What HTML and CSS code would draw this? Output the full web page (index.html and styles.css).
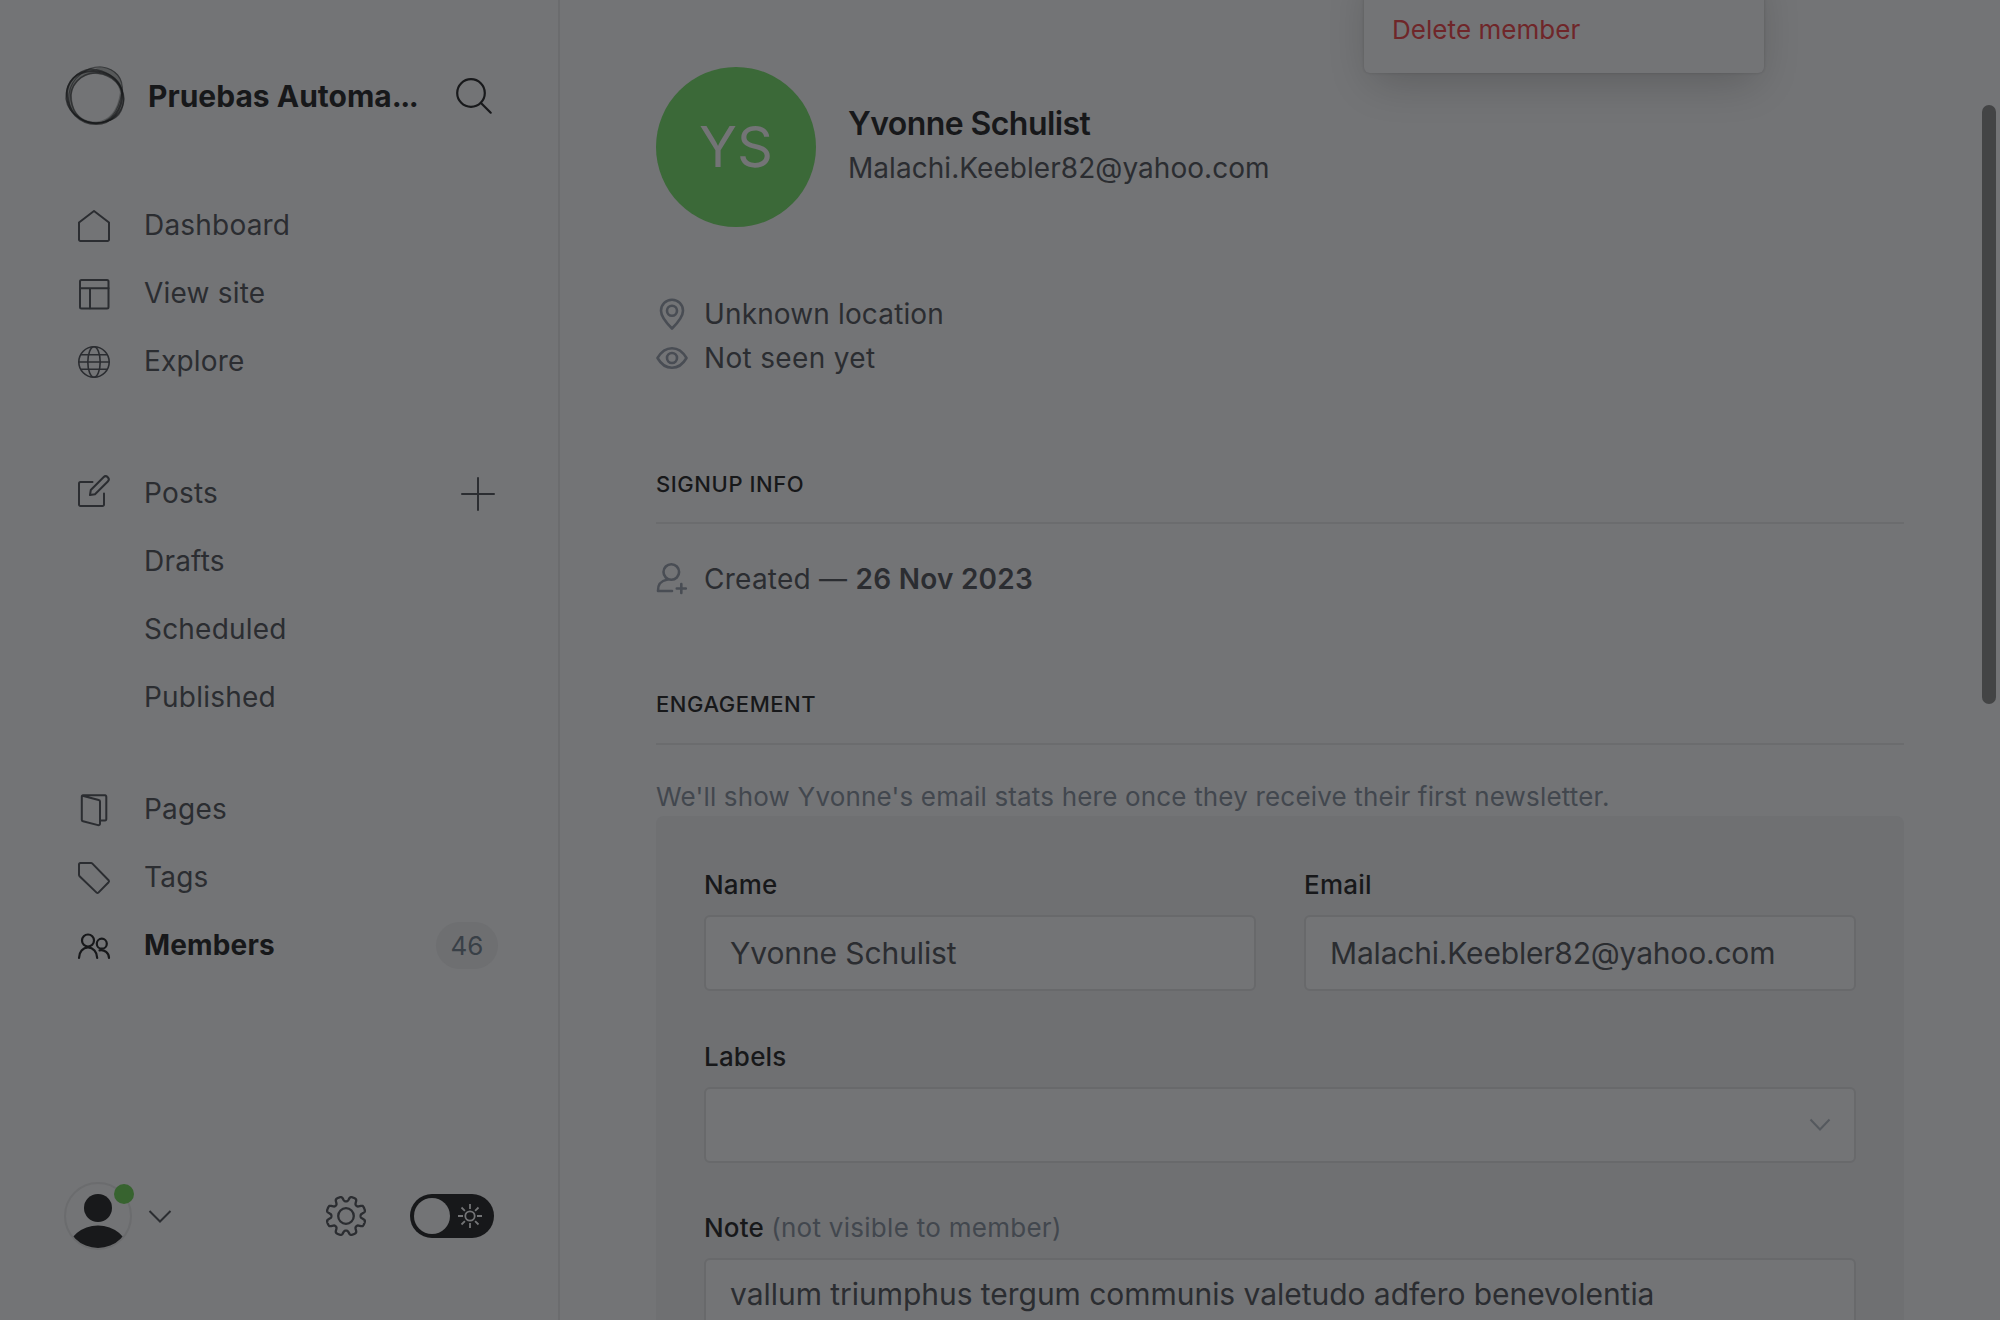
FILE: index.html
```html
<!DOCTYPE html>
<html lang="en">
<head>
<meta charset="utf-8">
<title>Members</title>
<link rel="stylesheet" href="styles.css">
</head>
<body>
<div class="app">
  <aside class="sidebar">
    <header class="site">
      <svg class="site-logo" viewBox="0 0 60 60" fill="none" stroke="#18191b">
        <path fill="#18191b" fill-opacity=".3" fill-rule="evenodd" stroke="none" d="M1 31C1 14 12 3 30 3C38 -2 56 4 57 19C62 36 56 52 44 55C20 64 2 48 1 31ZM7 32C8 46 16 56 32 55.500C46 54 53 42 55 26C52 12 42 8 28 8C14 10 6 20 7 32Z"/>
        <path d="M2 30C1 15 12 5 28 5C44 6 55 14 57 27C58 43 47 58 31 58C14 58 3 45 2 30Z" stroke-width="2" stroke-opacity=".7"/>
        <path d="M1 33C0 18 12 4 26 3C40 4 54 12 57 24C61 40 56 52 42 55C24 62 3 49 1 33Z" stroke-width="1.300" stroke-opacity=".6"/>
        <path d="M6 34C4 20 16 6 32 7C48 9 58 20 59 33C58 46 47 57 32 57C17 58 8 48 6 34Z" stroke-width="1.500" stroke-opacity=".6"/>
        <path d="M4 28C6 12 22 0 37 1C50 3 59 12 57 26C54 44 46 57 30 57C12 56 2 42 4 28Z" stroke-width="1.200" stroke-opacity=".55"/>
      </svg>
      <h1 class="site-title">Pruebas Automa<span class="dots">...</span></h1>
      <svg class="icon-search" viewBox="0 0 36 36" fill="none" stroke="#18191b" stroke-width="2.200" stroke-linecap="round"><circle cx="15" cy="15" r="13.800"/><path d="M25 25l9.700 9.700"/></svg>
    </header>

    <nav class="nav">
      <ul class="group">
        <li><svg class="down" viewBox="0 0 32 32"><path d="M1 12.500 16 1l15 11.500v17A1.500 1.500 0 0 1 29.500 31h-27A1.500 1.500 0 0 1 1 29.500z"/></svg><span>Dashboard</span></li>
        <li><svg class="down" viewBox="0 0 32 32"><rect x="2" y="2" width="28.500" height="28.500" rx="1.500"/><path d="M2 10.300h28.500M12 10.300v20"/></svg><span>View site</span></li>
        <li><svg class="thin down" viewBox="0 0 32 32"><circle cx="16" cy="16" r="15.200"/><ellipse cx="16" cy="16" rx="6.200" ry="15.200"/><path d="M.8 16h30.400M3 8.700h26M3 23.300h26"/></svg><span>Explore</span></li>
      </ul>
      <ul class="group posts">
        <li><svg class="up" viewBox="0 0 32 32"><path d="M14.500 7H2.500A1.500 1.500 0 0 0 1 8.500v21A1.500 1.500 0 0 0 2.500 31h22a1.500 1.500 0 0 0 1.500-1.500V18.500"/><path d="M12 20l.8-5L25.500 2.200a2.900 2.900 0 0 1 4.300 4.300L17 19.200z"/></svg><span>Posts</span><svg class="plus" viewBox="0 0 34 34"><path d="M17 1v32M1 17h32"/></svg></li>
        <li class="sub"><span>Drafts</span></li>
        <li class="sub"><span>Scheduled</span></li>
        <li class="sub"><span>Published</span></li>
      </ul>
      <ul class="group">
        <li><svg class="down" viewBox="0 0 32 32"><path d="M23.500 26.500H27A1.300 1.300 0 0 0 28.300 25V3A1.500 1.500 0 0 0 27 1.300H5A1.300 1.300 0 0 0 3.800 2.700V25.800a1.500 1.500 0 0 0 1.200 1.500l15 3.800a1.500 1.500 0 0 0 2-1.400V7.500A1.500 1.500 0 0 0 20.700 6L4.500 1.800"/></svg><span>Pages</span></li>
        <li><svg class="down" viewBox="0 0 32 32"><path d="M1 2.500A1.500 1.500 0 0 1 2.500 1h10.500a2 2 0 0 1 1.400.6L30.600 18.200a1.500 1.500 0 0 1 0 2L20.400 30.600a1.300 1.300 0 0 1-1.800 0L1.600 14.200A2 2 0 0 1 1 13z"/></svg><span>Tags</span></li>
        <li class="active"><svg class="down" viewBox="0 0 32 32"><circle cx="10" cy="10.500" r="6"/><circle cx="23.800" cy="13.700" r="5"/><path d="M1 28c0-6 3.900-10.500 9-10.500s9.200 4.500 9.200 10.500M21.500 20.300c5-1 9.500 2.700 9.500 7.700"/></svg><span>Members</span><b class="count">46</b></li>
      </ul>
    </nav>

    <footer class="user">
      <div class="user-avatar">
        <svg viewBox="0 0 64 64"><clipPath id="face"><circle cx="32" cy="32" r="32"/></clipPath><g clip-path="url(#face)" fill="#18191b"><circle cx="32" cy="24" r="14"/><ellipse cx="32" cy="67" rx="30" ry="25.500"/></g></svg>
        <i class="status"></i>
      </div>
      <svg class="user-chevron" viewBox="0 0 24 14"><path d="M1.500 2 12 12.500 22.500 2"/></svg>
      <svg class="gear" viewBox="0 0 40 40"><circle cx="20" cy="20" r="7.800"/><path id="cog" d=""/></svg>
      <div class="toggle"><i class="knob"></i>
        <svg viewBox="0 0 24 24"><circle cx="12" cy="12" r="4.700"/><path d="M12 0v5M12 19v5M0 12h5M19 12h5M3.500 3.500l3.400 3.400M17.100 17.100l3.400 3.400M3.500 20.500l3.400-3.400M17.100 6.900l3.400-3.400"/></svg>
      </div>
    </footer>
  </aside>

  <main class="main">
    <section class="profile">
      <div class="avatar">YS</div>
      <div class="who">
        <h2 class="name">Yvonne Schulist</h2>
        <p class="email">Malachi.Keebler82@yahoo.com</p>
      </div>
    </section>
    <section class="facts">
      <p class="place"><svg viewBox="0 0 32 32"><path d="M16 30.500C12 26.500 5 19 5 12.700a11 11 0 0 1 22 0C27 19 20 26.500 16 30.500z"/><circle cx="16" cy="12.800" r="5"/></svg><span>Unknown location</span></p>
      <p class="seen"><svg viewBox="0 0 32 32"><path d="M1.500 16C5 10 10.500 6.200 16 6.200S27 10 30.500 16C27 22 21.500 25.800 16 25.800S5 22 1.500 16z"/><circle cx="16" cy="16" r="5"/></svg><span>Not seen yet</span></p>
    </section>
    <h3 class="heading">SIGNUP INFO</h3>
    <p class="created"><svg viewBox="0 0 32 32"><circle cx="15.300" cy="9" r="7.800"/><path d="M16 28H2c-.3-7 2.500-10 9.500-11.500M25.300 21v9M20.800 25.500h9"/></svg><span>Created — <b>26 Nov 2023</b></span></p>
    <h3 class="heading second">ENGAGEMENT</h3>
    <p class="stats">We'll show Yvonne's email stats here once they receive their first newsletter.</p>
    <form class="panel">
      <div class="pair">
        <div class="field"><label>Name</label><div class="input"><span class="t-name">Yvonne Schulist</span></div></div>
        <div class="field"><label>Email</label><div class="input"><span class="t-mail">Malachi.Keebler82@yahoo.com</span></div></div>
      </div>
      <div class="field labels"><label>Labels</label><div class="input select"><svg viewBox="0 0 22 14"><path d="M1.500 1.500 11 11.500 20.500 1.500"/></svg></div></div>
      <div class="field"><label>Note <em>(not visible to member)</em></label><div class="input note"><span class="t-note">vallum triumphus tergum communis valetudo adfero benevolentia</span></div></div>
    </form>
  </main>
  <div class="menu"><span>Delete member</span></div>
  <i class="scroll-thumb"></i>
</div>
<script src="gear.js"></script>
</body>
</html>
```
FILE: gear.js
```
// Builds the eight-tooth outline of the settings icon.
(function () {
  var n = 8, d = "", steps = 480;
  for (var i = 0; i <= steps; i++) {
    var a = i / steps * Math.PI * 2;
    var w = Math.cos((a + Math.PI / n) * n);
    var s = Math.tanh(2.2 * w + 0.5) / Math.tanh(2.2);
    var r = 17.1 + 2.6 * s;
    d += (i ? "L" : "M") + (20 + r * Math.cos(a)).toFixed(2) + " " + (20 + r * Math.sin(a)).toFixed(2);
  }
  document.getElementById("cog").setAttribute("d", d + "Z");
})();
```
FILE: styles.css
```css
* { box-sizing: border-box; margin: 0; padding: 0; }
html, body { width: 2000px; height: 1320px; overflow: hidden; }
body { background: #737476; font-family: Inter, "Liberation Sans", sans-serif; color: #2b2d31; font-size: 28px; }
svg { display: block; flex: none; overflow: visible; fill: none; }
ul { list-style: none; }

.app { position: relative; display: flex; height: 1320px; overflow: hidden; }

.sidebar { width: 560px; flex: none; border-right: 2px solid #6b6c6e; display: flex; flex-direction: column; padding: 65px 0 0 64px; }
.site { display: flex; align-items: center; height: 62px; }
.site-logo { width: 60px; height: 60px; margin-left: 1px; }
.site-title { flex: none; width: 331px; padding-left: 23px; font-size: 30px; font-weight: 700; color: #17181a; white-space: nowrap; }
.dots { letter-spacing: -1.500px; }
.icon-search { width: 36px; height: 36px; }

.nav { padding: 64px 0 0 14px; }
.group { margin-bottom: 64px; }
.group.posts { margin-bottom: 44px; }
.group li { display: flex; align-items: center; height: 68px; letter-spacing: .2px; }
.group li svg { width: 32px; height: 32px; stroke: #2b2d31; stroke-width: 2; stroke-linejoin: round; stroke-linecap: round; }
.group li svg.thin { stroke-width: 1.600; }
.group li span { margin-left: 34px; flex: 1; }
.group li.sub { padding-left: 32px; }
.group li svg.up { margin-top: -5px; }
.group li svg.down { margin-top: 1px; }
.group li svg.plus { width: 34px; height: 34px; margin: 1px 63px 0 0; }
.group li.active { color: #17181a; font-weight: 700; letter-spacing: .15px; }
.group li.active svg { stroke: #17181a; stroke-width: 2.200; }
.count { width: 62px; height: 47px; margin-right: 60px; border-radius: 24px; background: #6e6f71; color: #394047; font-size: 26px; font-weight: 400; line-height: 47px; text-align: center; }

.user { display: flex; align-items: center; height: 68px; margin-top: auto; margin-bottom: 70px; }
.user-avatar { position: relative; width: 68px; height: 68px; border: 2px solid #6b6c6e; border-radius: 50%; }
.status { position: absolute; left: 48px; top: 0; width: 20px; height: 20px; border-radius: 50%; background: #37632f; }
.user-chevron { width: 24px; height: 14px; margin-left: 16px; stroke: #2b2d31; stroke-width: 2; }
.gear { width: 40px; height: 40px; margin-left: 154px; stroke: #2b2d31; stroke-width: 2.300; }
.toggle { width: 84px; height: 44px; margin-left: 44px; padding: 4px; border-radius: 22px; background: #17181a; display: flex; align-items: center; }
.knob { width: 36px; height: 36px; border-radius: 50%; background: #737476; }
.toggle svg { width: 24px; height: 24px; margin-left: 8px; stroke: #737476; stroke-width: 1.800; }

.main { padding: 67px 0 0 96px; width: 1344px; }
.profile { display: flex; height: 160px; align-items: center; }
.who { margin-top: -2px; }
.avatar { width: 160px; height: 160px; margin-right: 32px; border-radius: 50%; background: #3b6938; color: #737476; font-size: 56px; line-height: 160px; text-align: center; }
.name { font-size: 32px; font-weight: 600; line-height: 44px; color: #17181a; letter-spacing: -.58px; }
.email { line-height: 44px; letter-spacing: .05px; }
.facts { padding-top: 65px; }
.facts p { display: flex; align-items: center; height: 44px; }
.facts .place { letter-spacing: .14px; }
.facts .seen { letter-spacing: .33px; }
.facts svg, .created svg { width: 32px; height: 32px; margin-right: 16px; stroke: #494d54; stroke-width: 2.600; stroke-linejoin: round; stroke-linecap: round; }
.heading { margin-top: 88px; height: 56px; border-bottom: 2px solid #6b6c6e; font-size: 22px; font-weight: 500; line-height: 32px; letter-spacing: .56px; color: #17181a; }
.heading.second { line-height: 30px; }
.created { display: flex; align-items: center; height: 44px; margin-top: 33px; letter-spacing: .25px; }
.created b { font-weight: 600; }
.stats { margin-top: 34px; height: 37px; font-size: 26px; line-height: 36px; letter-spacing: .18px; color: #42474e; white-space: nowrap; }
.panel { height: 520px; padding: 48px 48px 0; border-radius: 8px; background: #6f7072; }
.pair { display: grid; grid-template-columns: 1fr 1fr; gap: 48px; }
.field { height: 172px; }
.field.labels { height: 171px; }
.field label { display: block; height: 51px; font-size: 26px; font-weight: 500; line-height: 42px; letter-spacing: .2px; color: #17181a; white-space: nowrap; }
.field em { font-style: normal; font-weight: 400; letter-spacing: .28px; color: #42474e; }
.input { display: flex; align-items: center; height: 76px; padding: 0 24px; border: 2px solid #68696b; border-radius: 6px; background: #737476; font-size: 30px; white-space: nowrap; }
.t-name { letter-spacing: -.1px; }
.t-mail { letter-spacing: -.19px; }
.t-note { letter-spacing: -.04px; }
.select { justify-content: flex-end; }
.select svg { width: 22px; height: 14px; margin: 0 -1px 0 0; stroke: #55595e; stroke-width: 2; }
.note { height: 200px; align-items: flex-start; line-height: 69px; }

.menu { position: absolute; left: 1364px; top: -40px; width: 400px; height: 113px; padding: 54px 28px 0; border-radius: 6px; background: #737476; box-shadow: 0 0 2px 1px rgba(0,0,0,.08), 0 16px 44px -8px rgba(0,0,0,.2); color: #6f2629; font-size: 26px; line-height: 32px; letter-spacing: .05px; }
.scroll-thumb { position: absolute; left: 1982px; top: 105px; width: 14px; height: 599px; border-radius: 7px; background: #434445; }
```
